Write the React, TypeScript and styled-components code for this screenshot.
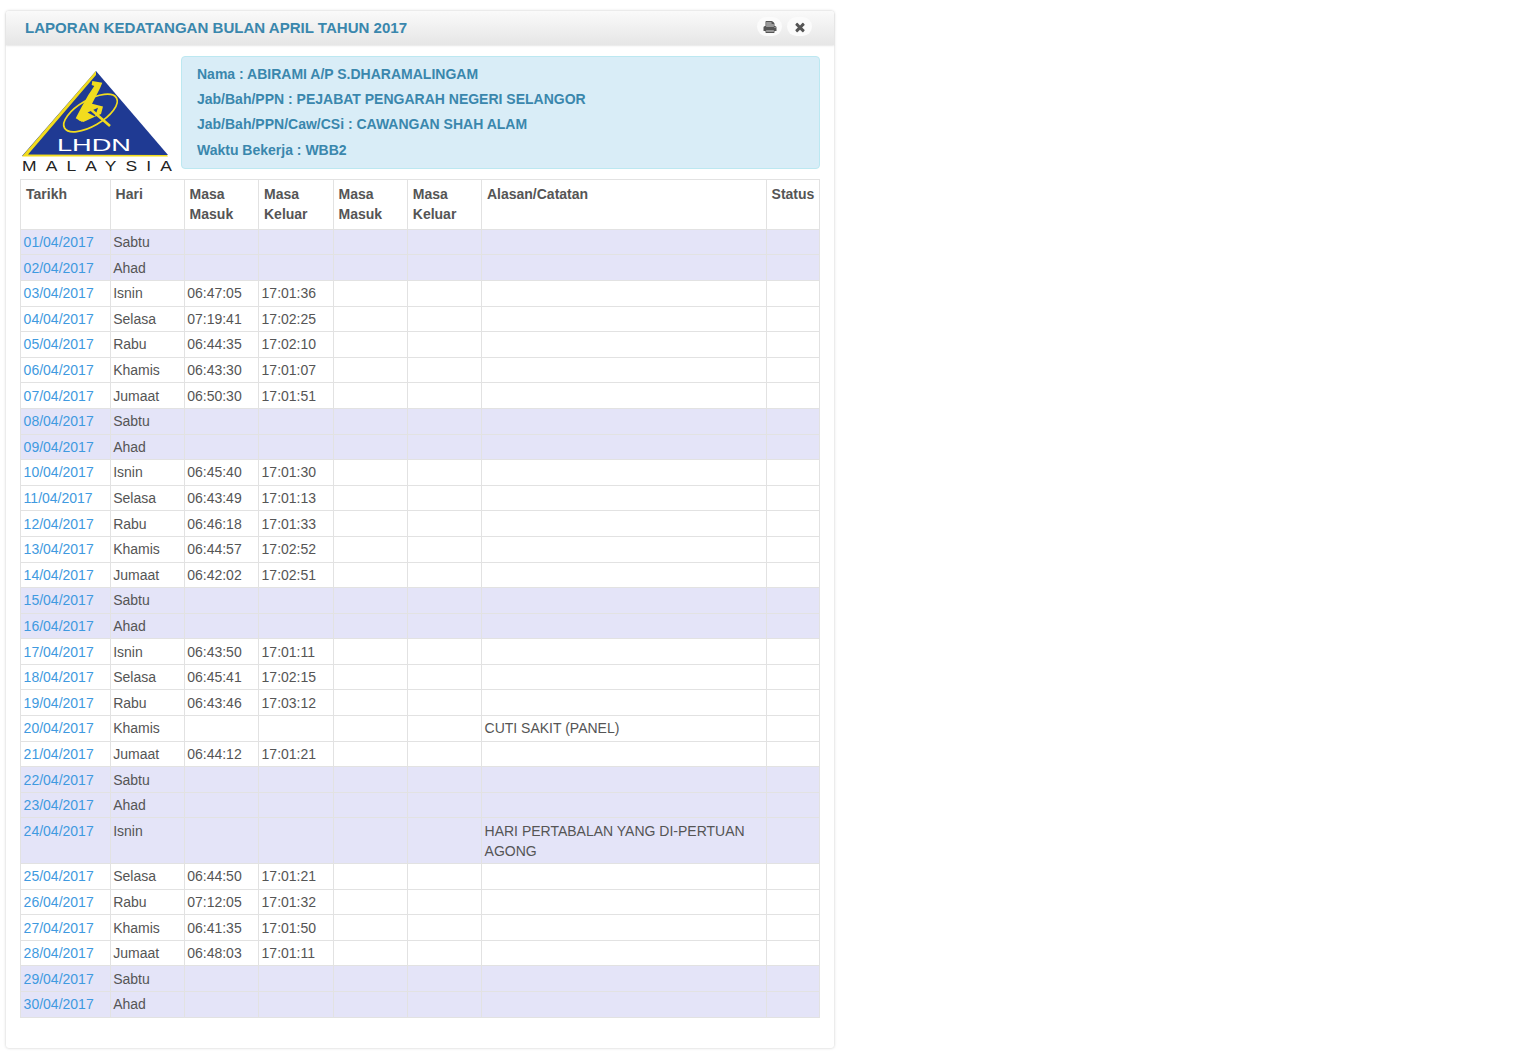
import React from "react";
import styled, { createGlobalStyle } from "styled-components";

const Global = createGlobalStyle`
  html, body { margin: 0; padding: 0; background: #fff; }
  body { font-family: "Liberation Sans", Arial, sans-serif; font-size: 14px; line-height: 20px; color: #555; }
`;
const Page = styled.div`
  padding: 11px 0 10px 6px;
  width: 828px;
`;
const Panel = styled.section`
  width: 828px;
  height: 1037px;
  box-sizing: border-box;
  background: #fff;
  border-radius: 3px;
  box-shadow: 0 0 3px rgba(0, 0, 0, 0.22);
  display: flex;
  flex-direction: column;
`;
const Header = styled.header`
  height: 34px;
  flex: none;
  box-sizing: border-box;
  padding: 0 22px 0 19px;
  display: flex;
  align-items: center;
  justify-content: space-between;
  background: linear-gradient(#fafafa, #e6e6e6);
  border-radius: 3px 3px 0 0;
  box-shadow: 0 1px 2px rgba(0, 0, 0, 0.1);
`;
const Title = styled.h1`
  margin: 0;
  font-size: 15.05px;
  font-weight: 700;
  line-height: 34px;
  color: #3a87ad;
`;
const Tools = styled.div`
  display: flex;
  gap: 5px;
  margin-top: -3px;
`;
const ToolButton = styled.button`
  width: 25px;
  height: 19px;
  padding: 0;
  border: 0;
  border-radius: 10px;
  background: #fbfbfb;
  color: #555;
  display: flex;
  align-items: center;
  justify-content: center;
`;
const Body = styled.div`
  padding: 11px 14.5px 0 14px;
  display: flex;
  flex-direction: column;
  gap: 4.8px;
`;
const Top = styled.div`
  display: flex;
  align-items: flex-start;
`;
const LogoBox = styled.div`
  width: 161px;
  flex: none;
  padding-top: 10px;
`;
const InfoBox = styled.div`
  flex: 1;
  height: 113px;
  box-sizing: border-box;
  padding: 5px 15px;
  background: #d9edf7;
  border: 1px solid #bce8f1;
  border-radius: 4px;
  color: #3a87ad;
  font-weight: 700;
  font-size: 14px;
  line-height: 25.2px;
`;
const InfoLine = styled.div``;
const Table = styled.table`
  width: 799.5px;
  table-layout: fixed;
  border-collapse: collapse;
  border: 1px solid #ddd;
  font-size: 14px;
  line-height: 20px;
  color: #555;
`;
const Th = styled.th`
  padding: 4px 5px 5px;
  text-align: left;
  vertical-align: top;
  font-weight: 700;
  border: 1px solid #e2e2e2;
  border-bottom: 0;
`;
const Row = styled.tr<{ $off: boolean }>`
  background: ${(p) => (p.$off ? "#e4e4f8" : "#fff")};
`;
const Td = styled.td`
  padding: 2.3px 3px 2.3px 2.6px;
  vertical-align: top;
  border: 1px solid #e2e2e2;
`;
const DateLink = styled.a`
  color: #3f9ae0;
  text-decoration: none;
`;
const LogoSvg = styled.svg`
  display: block;
`;

const Y = "#f2dc1e";
const Logo = () => (
  <LogoSvg width="156" height="108" viewBox="0 0 156 108">
    <polygon points="76,5 148,89 2,90" fill="#1f3a93" />
    <polygon points="76,5 2,90.5 148,90.5 147,89 8,88.5 76,9" fill={Y} />
    <ellipse cx="70.5" cy="47" rx="30" ry="13" transform="rotate(-30 70.5 47)" fill="none" stroke={Y} strokeWidth="1.7" />
    <polygon points="72.3,15 82.3,16.7 80,22.3 72.3,37.3 66.7,47.3 61.7,55.7 55.7,52.3 61.7,40.7 68.3,29 74.3,20 71.7,19" fill={Y} />
    <path fillRule="evenodd" fill={Y} d="M58.3 54 L69 37 L83 40.5 L81 48 L63.3 56 Z M67.5 46.5 L78 41.8 L75 50.5 Z" />
    <path d="M68.3 41.3 L90 60" fill="none" stroke={Y} strokeWidth="2.6" />
    <text x="37" y="84.5" textLength="74" lengthAdjust="spacingAndGlyphs" fill="#fff" fontFamily="Liberation Sans, sans-serif" fontSize="16">LHDN</text>
    <g transform="scale(1.25 1)">
      <text x="1.6" y="105" textLength="120" lengthAdjust="spacing" fill="#222" fontFamily="Liberation Sans, sans-serif" fontSize="14">MALAYSIA</text>
    </g>
  </LogoSvg>
);

const PrintIcon = () => (
  <svg width="14" height="14" viewBox="0 0 1792 1792" fill="currentColor">
    <rect x="448" y="256" width="896" height="640" fill="#999" />
    <rect x="448" y="1280" width="896" height="256" fill="#999" />
    <path d="M448 1536h896v-256h-896v256zm0-640h896v-384h-160q-40 0-68-28t-28-68v-160h-640v640zm1152 64q0-26-19-45t-45-19-45 19-19 45 19 45 45 19 45-19 19-45zm128 0v416q0 13-9.5 22.5t-22.5 9.5h-224v160q0 40-28 68t-68 28h-960q-40 0-68-28t-28-68v-160h-224q-13 0-22.5-9.5t-9.5-22.5v-416q0-79 56.5-135.5t135.5-56.5h64v-544q0-40 28-68t68-28h672q40 0 88 20t76 48l152 152q28 28 48 76t20 88v256h64q79 0 135.5 56.5t56.5 135.5z" />
  </svg>
);
const CloseIcon = () => (
  <svg width="14" height="14" viewBox="0 0 1792 1792" fill="currentColor">
    <path d="M1490 1322q0 40-28 68l-136 136q-28 28-68 28t-68-28l-294-294-294 294q-28 28-68 28t-68-28l-136-136q-28-28-28-68t28-68l294-294-294-294q-28-28-28-68t28-68l136-136q28-28 68-28t68 28l294 294 294-294q28-28 68-28t68 28l136 136q28 28 28 68t-28 68l-294 294 294 294q28 28 28 68z" />
  </svg>
);

type R = [string, string, string?, string?, string?];
const rows: R[] = [
  ["01/04/2017", "Sabtu"], ["02/04/2017", "Ahad"],
  ["03/04/2017", "Isnin", "06:47:05", "17:01:36"],
  ["04/04/2017", "Selasa", "07:19:41", "17:02:25"],
  ["05/04/2017", "Rabu", "06:44:35", "17:02:10"],
  ["06/04/2017", "Khamis", "06:43:30", "17:01:07"],
  ["07/04/2017", "Jumaat", "06:50:30", "17:01:51"],
  ["08/04/2017", "Sabtu"], ["09/04/2017", "Ahad"],
  ["10/04/2017", "Isnin", "06:45:40", "17:01:30"],
  ["11/04/2017", "Selasa", "06:43:49", "17:01:13"],
  ["12/04/2017", "Rabu", "06:46:18", "17:01:33"],
  ["13/04/2017", "Khamis", "06:44:57", "17:02:52"],
  ["14/04/2017", "Jumaat", "06:42:02", "17:02:51"],
  ["15/04/2017", "Sabtu"], ["16/04/2017", "Ahad"],
  ["17/04/2017", "Isnin", "06:43:50", "17:01:11"],
  ["18/04/2017", "Selasa", "06:45:41", "17:02:15"],
  ["19/04/2017", "Rabu", "06:43:46", "17:03:12"],
  ["20/04/2017", "Khamis", "", "", "CUTI SAKIT (PANEL)"],
  ["21/04/2017", "Jumaat", "06:44:12", "17:01:21"],
  ["22/04/2017", "Sabtu"], ["23/04/2017", "Ahad"],
  ["24/04/2017", "Isnin", "", "", "HARI PERTABALAN YANG DI-PERTUAN AGONG"],
  ["25/04/2017", "Selasa", "06:44:50", "17:01:21"],
  ["26/04/2017", "Rabu", "07:12:05", "17:01:32"],
  ["27/04/2017", "Khamis", "06:41:35", "17:01:50"],
  ["28/04/2017", "Jumaat", "06:48:03", "17:01:11"],
  ["29/04/2017", "Sabtu"], ["30/04/2017", "Ahad"],
];
const isOff = (r: R) => r[1] === "Sabtu" || r[1] === "Ahad" || r[0] === "24/04/2017";
const widths = [89.6, 74, 74.4, 74.6, 74.2, 74.2, 284.6, 53.9];

export default function App() {
  return (
    <Page>
      <Global />
      <Panel>
        <Header>
          <Title>LAPORAN KEDATANGAN BULAN APRIL TAHUN 2017</Title>
          <Tools>
            <ToolButton aria-label="Cetak"><PrintIcon /></ToolButton>
            <ToolButton aria-label="Tutup"><CloseIcon /></ToolButton>
          </Tools>
        </Header>
        <Body>
          <Top>
            <LogoBox><Logo /></LogoBox>
            <InfoBox>
              <InfoLine>Nama : ABIRAMI A/P S.DHARAMALINGAM</InfoLine>
              <InfoLine>Jab/Bah/PPN : PEJABAT PENGARAH NEGERI SELANGOR</InfoLine>
              <InfoLine>Jab/Bah/PPN/Caw/CSi : CAWANGAN SHAH ALAM</InfoLine>
              <InfoLine>Waktu Bekerja : WBB2</InfoLine>
            </InfoBox>
          </Top>
          <Table>
            <colgroup>
              {widths.map((w, i) => <col key={i} width={w} />)}
            </colgroup>
            <thead>
              <tr>
                <Th>Tarikh</Th><Th>Hari</Th>
                <Th>Masa Masuk</Th><Th>Masa Keluar</Th>
                <Th>Masa Masuk</Th><Th>Masa Keluar</Th>
                <Th>Alasan/Catatan</Th><Th>Status</Th>
              </tr>
            </thead>
            <tbody>
              {rows.map((r) => (
                <Row key={r[0]} $off={isOff(r)}>
                  <Td><DateLink href="#">{r[0]}</DateLink></Td>
                  <Td>{r[1]}</Td>
                  <Td>{r[2]}</Td>
                  <Td>{r[3]}</Td>
                  <Td></Td>
                  <Td></Td>
                  <Td>{r[4]}</Td>
                  <Td></Td>
                </Row>
              ))}
            </tbody>
          </Table>
        </Body>
      </Panel>
    </Page>
  );
}
